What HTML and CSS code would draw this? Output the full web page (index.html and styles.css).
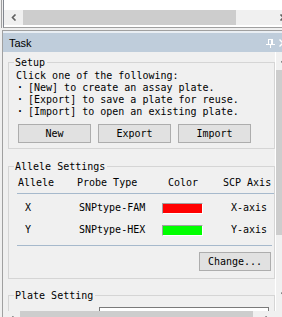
FILE: index.html
```html
<!DOCTYPE html>
<html lang="en">
<head>
    <meta charset="UTF-8">
    <title>Task</title>
    <link rel="stylesheet" href="styles.css">
</head>
<body>
    <div class="frame">
        <!-- upper document window, only its scrollbar shows -->
        <div class="upper">
            <div class="upper-in">
                <div class="hscroll top">
                    <span class="arrow wide"><svg width="6" height="7" viewBox="0 0 6 7"><polyline points="4.5,0.5 1.5,3.5 4.5,6.5" /></svg></span>
                    <span class="thumb top-thumb"></span>
                    <span class="track"></span>
                    <span class="arrow"><svg width="6" height="7" viewBox="0 0 6 7"><polyline points="1.5,0.5 4.5,3.5 1.5,6.5" /></svg></span>
                </div>
            </div>
        </div>
        <div class="seam"></div>

        <div class="dock">
            <div class="caption">
                <span class="caption-title">Task</span>
                <span class="caption-fill"></span>
                <svg class="pin" width="9" height="10" viewBox="0 0 9 10">
                    <path d="M2.5 1.5H6.5M2.5 1V6M5.5 1V6M6.5 1V6M0 6.5H9M4.5 7V10" />
                </svg>
                <svg class="close" width="8" height="8" viewBox="0 0 8 8">
                    <path d="M0.5 0.5L7.5 7.5M7.5 0.5L0.5 7.5" />
                </svg>
            </div>

            <div class="dock-body">
                <div class="pane">
                    <fieldset class="group setup">
                        <legend>Setup</legend>
                        <div class="intro">
                            <p>Click one of the following:</p>
                            <p><span class="dot">·</span>[New] to create an assay plate.</p>
                            <p><span class="dot">·</span>[Export] to save a plate for reuse.</p>
                            <p><span class="dot">·</span>[Import] to open an existing plate.</p>
                        </div>
                        <div class="actions">
                            <button class="btn">New</button>
                            <button class="btn">Export</button>
                            <button class="btn">Import</button>
                        </div>
                    </fieldset>

                    <fieldset class="group alleles">
                        <legend>Allele Settings</legend>
                        <div class="list">
                            <div class="list-head">
                                <span>Allele</span>
                                <span>Probe Type</span>
                                <span>Color</span>
                                <span>SCP Axis</span>
                            </div>
                            <div class="row first">
                                <span>X</span>
                                <span>SNPtype-FAM</span>
                                <span><i class="swatch red"></i></span>
                                <span>X-axis</span>
                            </div>
                            <div class="row">
                                <span>Y</span>
                                <span>SNPtype-HEX</span>
                                <span><i class="swatch green"></i></span>
                                <span>Y-axis</span>
                            </div>
                            <div class="list-end"></div>
                        </div>
                        <div class="change-row">
                            <button class="btn change">Change...</button>
                        </div>
                    </fieldset>

                    <fieldset class="group plate">
                        <legend>Plate Setting</legend>
                        <div class="combo"></div>
                    </fieldset>
                </div>

                <div class="vscroll">
                    <span class="arrow"><svg width="7" height="6" viewBox="0 0 7 6"><polyline points="0.5,4.5 3.5,1.5 6.5,4.5" /></svg></span>
                    <span class="thumb"></span>
                    <span class="arrow down"><svg width="7" height="6" viewBox="0 0 7 6"><polyline points="0.5,1.5 3.5,4.5 6.5,1.5" /></svg></span>
                </div>

                <div class="hscroll bottom">
                    <span class="arrow"><svg width="6" height="7" viewBox="0 0 6 7"><polyline points="4.5,0.5 1.5,3.5 4.5,6.5" /></svg></span>
                    <span class="thumb bottom-thumb"></span>
                    <span class="track"></span>
                    <span class="arrow"><svg width="6" height="7" viewBox="0 0 6 7"><polyline points="1.5,0.5 4.5,3.5 1.5,6.5" /></svg></span>
                </div>
                <div class="corner"></div>
            </div>
        </div>
    </div>
</body>
</html>
```

FILE: styles.css
```css
* {
    margin: 0;
    padding: 0;
    box-sizing: border-box;
}
html, body {
    height: 100%;
    overflow: hidden;
}
body {
    background: #f0f0f0;
    font: 10px/12px "DejaVu Sans Mono", monospace;
    color: #000;
}
.frame {
    width: 282px;
    height: 317px;
    overflow: hidden;
}

/* upper window */
.upper {
    width: 289px;
    margin-left: 1px;
    padding-left: 1px;
    border-left: 1px solid #a0a0a0;
}
.upper-in {
    background: #fff;
    border-left: 1px solid #828790;
    border-bottom: 1px solid #a0a0a0;
    padding: 10px 0 2px;
}
.seam {
    height: 2px;
}

/* scrollbars */
.hscroll {
    display: flex;
    background: #f0f0f0;
}
.hscroll.top {
    height: 15px;
}
.hscroll.bottom {
    height: 17px;
}
.arrow {
    flex: none;
    width: 17px;
    height: 17px;
    display: flex;
    align-items: center;
    justify-content: center;
}
.hscroll.top .arrow {
    height: 15px;
}
.arrow.wide {
    width: 19px;
}
.arrow polyline {
    fill: none;
    stroke: #606060;
    stroke-width: 1.6;
}
.thumb {
    background: #cdcdcd;
}
.top-thumb {
    width: 213px;
}
.bottom-thumb {
    width: 233px;
}
.track {
    flex: 1;
}
.vscroll {
    display: flex;
    flex-direction: column;
    border-left: 1px solid #fff;
    background: #f0f0f0;
}
.vscroll .thumb {
    margin-top: 1px;
    height: 165px;
}
.vscroll .down {
    margin-top: auto;
    margin-bottom: 9px;
}
.corner {
    background: #f0f0f0;
}

/* dock panel */
.dock {
    width: 288px;
    margin-left: 2px;
    border-left: 1px solid #a0a0a0;
    border-top: 1px solid #a0a0a0;
}
.caption {
    display: flex;
    align-items: center;
    height: 21px;
    border-top: 2px solid #e9eef3;
    padding: 1px 0 0 6px;
    background: #bfcddb;
}
.caption-title {
    font: 11px/18px "Liberation Sans", Arial, sans-serif;
}
.caption-fill {
    flex: 1;
}
.caption svg path {
    fill: none;
    stroke: #fff;
}
.pin {
    shape-rendering: crispEdges;
    margin-right: 4px;
}
.close {
    margin-right: 3px;
}
.close path {
    stroke-width: 1.4;
}
.dock-body {
    display: grid;
    grid-template-columns: 272px 18px;
    grid-template-rows: 259px 17px;
}
.pane {
    overflow: hidden;
    padding-top: 4px;
}

/* group boxes */
.group {
    border: 1px solid #d5d5d5;
    margin-left: 5px;
    padding: 0 0 5px 7px;
    min-width: 0;
}
.group legend {
    margin-left: -2px;
    padding: 0 2px 0 1px;
    line-height: 13px;
}
.alleles {
    margin-top: 11px;
    padding-bottom: 7px;
}
.plate {
    margin-top: 10px;
}
.intro {
    padding-top: 1px;
}
.dot {
    display: inline-block;
    width: 12px;
    padding-left: 1px;
    font-weight: bold;
}
.actions {
    display: grid;
    grid-template-columns: repeat(3, 73px);
    column-gap: 7px;
    margin: 6px 0 0 2px;
}
.btn {
    height: 19px;
    border: 1px solid #adadad;
    background: #e1e1e1;
    font: inherit;
    line-height: 17px;
    color: #000;
}

/* allele list */
.list {
    margin-left: 1px;
    width: 257px;
}
.list-head,
.row {
    display: grid;
    grid-template-columns: 57px 80px 58px 62px;
}
.list-head {
    padding: 4px 0;
    border-bottom: 1px solid #a6b9cc;
}
.list-head span:nth-child(1) { padding-left: 1px; }
.list-head span:nth-child(2) { padding-left: 3px; }
.list-head span:nth-child(3) { padding-left: 14px; }
.list-head span:nth-child(4) { padding-left: 11px; }
.row {
    height: 22px;
    align-items: center;
}
.row.first {
    margin-top: 3px;
}
.row span:nth-child(1) { padding-left: 8px; }
.row span:nth-child(2) { padding-left: 5px; }
.row span:nth-child(3) { padding-left: 8px; }
.row span:nth-child(4) { padding-left: 19px; }
.swatch {
    display: block;
    width: 41px;
    height: 11px;
    border: 1px solid;
    border-color: #a0a0a0 #fff #fff #a0a0a0;
}
.red {
    background: #ff0000;
}
.green {
    background: #00ff00;
}
.list-end {
    margin: 4px 2px 0 0;
    border-top: 1px solid #a6b9cc;
}
.change-row {
    display: flex;
    justify-content: flex-end;
    margin-top: 6px;
    padding-right: 3px;
}
.btn.change {
    width: 72px;
}
.combo {
    margin: 5px 0 0 83px;
    width: 170px;
    height: 21px;
    border: 1px solid #7a7a7a;
    background: #fff;
}
```
